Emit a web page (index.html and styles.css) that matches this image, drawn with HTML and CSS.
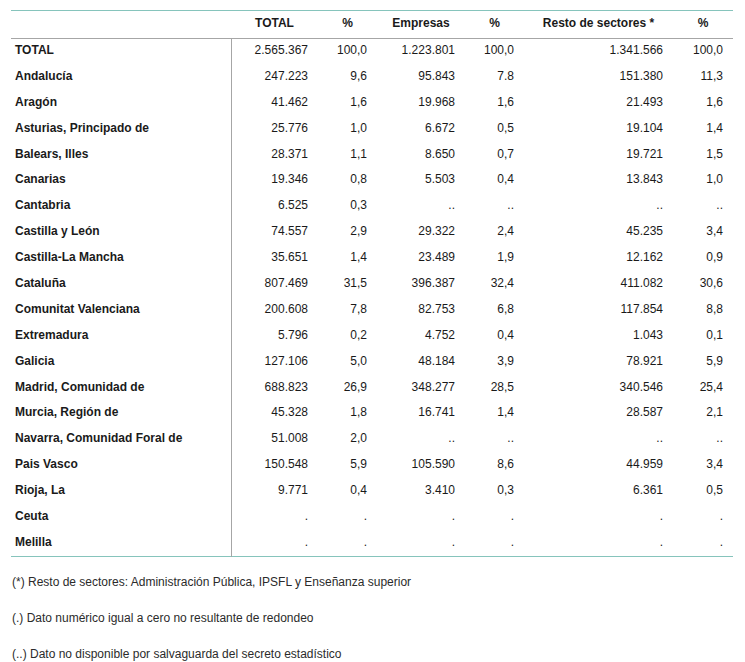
FILE: index.html
```html
<!DOCTYPE html>
<html lang="es">
<head>
<meta charset="utf-8">
<title>Tabla</title>
<link rel="stylesheet" href="styles.css">
</head>
<body>
<div class="page">
<table class="data">
<colgroup>
<col class="c-name"><col class="c-num"><col class="c-pct"><col class="c-num2"><col class="c-pct"><col class="c-num3"><col class="c-pct2">
</colgroup>
<thead>
<tr><th></th><th>TOTAL</th><th>%</th><th>Empresas</th><th>%</th><th>Resto de sectores *</th><th>%</th></tr>
</thead>
<tbody>
<tr><td>TOTAL</td><td>2.565.367</td><td>100,0</td><td>1.223.801</td><td>100,0</td><td>1.341.566</td><td>100,0</td></tr>
<tr><td>Andalucía</td><td>247.223</td><td>9,6</td><td>95.843</td><td>7.8</td><td>151.380</td><td>11,3</td></tr>
<tr><td>Aragón</td><td>41.462</td><td>1,6</td><td>19.968</td><td>1,6</td><td>21.493</td><td>1,6</td></tr>
<tr><td>Asturias, Principado de</td><td>25.776</td><td>1,0</td><td>6.672</td><td>0,5</td><td>19.104</td><td>1,4</td></tr>
<tr><td>Balears, Illes</td><td>28.371</td><td>1,1</td><td>8.650</td><td>0,7</td><td>19.721</td><td>1,5</td></tr>
<tr><td>Canarias</td><td>19.346</td><td>0,8</td><td>5.503</td><td>0,4</td><td>13.843</td><td>1,0</td></tr>
<tr><td>Cantabria</td><td>6.525</td><td>0,3</td><td>..</td><td>..</td><td>..</td><td>..</td></tr>
<tr><td>Castilla y León</td><td>74.557</td><td>2,9</td><td>29.322</td><td>2,4</td><td>45.235</td><td>3,4</td></tr>
<tr><td>Castilla-La Mancha</td><td>35.651</td><td>1,4</td><td>23.489</td><td>1,9</td><td>12.162</td><td>0,9</td></tr>
<tr><td>Cataluña</td><td>807.469</td><td>31,5</td><td>396.387</td><td>32,4</td><td>411.082</td><td>30,6</td></tr>
<tr><td>Comunitat Valenciana</td><td>200.608</td><td>7,8</td><td>82.753</td><td>6,8</td><td>117.854</td><td>8,8</td></tr>
<tr><td>Extremadura</td><td>5.796</td><td>0,2</td><td>4.752</td><td>0,4</td><td>1.043</td><td>0,1</td></tr>
<tr><td>Galicia</td><td>127.106</td><td>5,0</td><td>48.184</td><td>3,9</td><td>78.921</td><td>5,9</td></tr>
<tr><td>Madrid, Comunidad de</td><td>688.823</td><td>26,9</td><td>348.277</td><td>28,5</td><td>340.546</td><td>25,4</td></tr>
<tr><td>Murcia, Región de</td><td>45.328</td><td>1,8</td><td>16.741</td><td>1,4</td><td>28.587</td><td>2,1</td></tr>
<tr><td>Navarra, Comunidad Foral de</td><td>51.008</td><td>2,0</td><td>..</td><td>..</td><td>..</td><td>..</td></tr>
<tr><td>Pais Vasco</td><td>150.548</td><td>5,9</td><td>105.590</td><td>8,6</td><td>44.959</td><td>3,4</td></tr>
<tr><td>Rioja, La</td><td>9.771</td><td>0,4</td><td>3.410</td><td>0,3</td><td>6.361</td><td>0,5</td></tr>
<tr><td>Ceuta</td><td>.</td><td>.</td><td>.</td><td>.</td><td>.</td><td>.</td></tr>
<tr><td>Melilla</td><td>.</td><td>.</td><td>.</td><td>.</td><td>.</td><td>.</td></tr>
</tbody>
</table>
<div class="notes">
<p>(*) Resto de sectores: Administración Pública, IPSFL y Enseñanza superior</p>
<p>(.) Dato numérico igual a cero no resultante de redondeo</p>
<p>(..) Dato no disponible por salvaguarda del secreto estadístico</p>
</div>
</div>
</body>
</html>
```

FILE: styles.css
```css
html, body {
  margin: 0;
  padding: 0;
  background: #ffffff;
}
.page {
  padding: 10px 0 0 11px;
  font-family: "Liberation Sans", Arial, sans-serif;
  font-size: 12px;
  color: #1a1a1a;
}
.data {
  border-collapse: collapse;
  table-layout: fixed;
  width: 722px;
  border-top: 1px solid #86c4bc;
  border-bottom: 1px solid #86c4bc;
}
.c-name { width: 220px; }
.c-num { width: 87px; }
.c-pct { width: 59px; }
.c-num2 { width: 88px; }
.c-num3 { width: 149px; }
.c-pct2 { width: 60px; }
.data th {
  font-weight: bold;
  text-align: center;
  height: 28px;
  padding: 0 0 4px 0;
  box-sizing: border-box;
  border-bottom: 1px solid #a6a6a6;
  vertical-align: middle;
}
.data td {
  height: 25.9px;
  padding: 0 10px 3px 0;
  box-sizing: border-box;
  text-align: right;
  vertical-align: middle;
  white-space: nowrap;
}
.data td:first-child {
  text-align: left;
  font-weight: bold;
  padding-left: 4px;
  padding-right: 0;
  border-right: 1px solid #a6a6a6;
}
.notes {
  padding: 7px 0 0 1px;
  color: #2b2b2b;
}
.notes p {
  margin: 0;
  line-height: 36px;
}
```
